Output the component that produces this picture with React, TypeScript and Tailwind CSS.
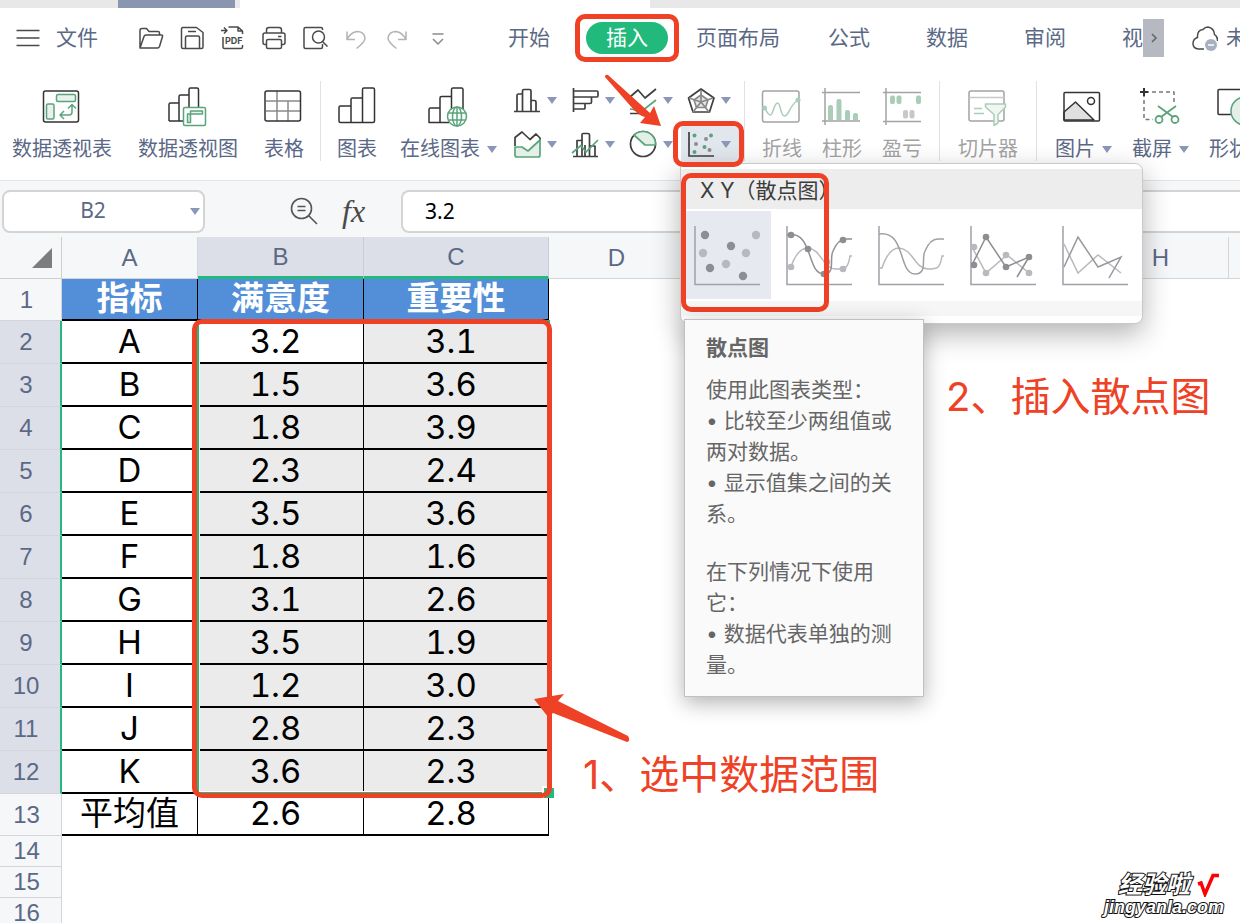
import React from "react";

const RED = "#ee4125";

const Caret = () => (
  <svg className="w-[10px] h-[7px] shrink-0" viewBox="0 0 10 7">
    <path d="M0 0H10L5 7Z" className="fill-[#8a97b8]" />
  </svg>
);

const quickActions = [
  {
    name: "打开",
    icon: (
      <path d="M2 23V5.500Q2 3.500 4 3.500H8.500L11 6.500H20Q21.500 6.500 21.500 8V9.500M2 23L6 11.500Q6.500 10 8 10H23.500Q25 10 24.500 11.500L21.500 21.500Q21 23 19.500 23Z" />
    ),
  },
  {
    name: "保存",
    icon: (
      <>
        <path d="M3.500 2.500H17.500L24 7.500V22Q24 23.500 22.500 23.500H4Q2.500 23.500 2.500 22V4Q2.500 2.500 4 2.500Z" />
        <path d="M6.500 23V12.500Q6.500 11 8 11H19Q20.500 11 20.500 12.500V23M9 6.500H17" />
      </>
    ),
  },
  {
    name: "输出为PDF",
    icon: (
      <>
        <path d="M8.500 2H18L22.500 6V9M18 2V6H22.500M3 12V22Q3 23.500 4.500 23.500H21Q22.500 23.500 22.500 22V20M1 5.500H6.500M4 2.500L7 5.500L4 8.500" />
        <text x="5" y="18.500" stroke="none" className="fill-[#4a4a4a] text-[9px] font-bold">PDF</text>
      </>
    ),
  },
  {
    name: "打印",
    icon: (
      <>
        <path d="M5.500 8V5Q5.500 2.500 8 2.500H18Q20.500 2.500 20.500 5V8M5 19.500H4Q2 19.500 2 17.500V10Q2 8 4 8H22Q24 8 24 10V17.500Q24 19.500 22 19.500H21M17 11.500H20.500" />
        <path d="M7 14.500H19Q20.500 14.500 20.500 16V22Q20.500 23.500 19 23.500H7Q5.500 23.500 5.500 22V16Q5.500 14.500 7 14.500Z" />
      </>
    ),
  },
  {
    name: "打印预览",
    icon: (
      <>
        <path d="M20.500 5V4Q20.500 2.500 19 2.500H3.500Q2 2.500 2 4V22Q2 23.500 3.500 23.500H19Q20.500 23.500 20.500 22V19" />
        <circle cx="16.500" cy="12" r="6" className="fill-white" />
        <path d="M20.500 16.500L25.500 21.500" />
      </>
    ),
  },
  {
    name: "撤销",
    dim: true,
    icon: <path d="M4 6.500V14.500H12M4 14.500Q8 7 14 6.500Q21 6.500 22 13Q22 17 13.500 23.500" />,
  },
  {
    name: "恢复",
    dim: true,
    icon: <path d="M22 6.500V14.500H14M22 14.500Q18 7 12 6.500Q5 6.500 4 13Q4 17 12.500 23.500" />,
  },
  {
    name: "自定义",
    dim: true,
    icon: <path d="M7.500 9H18.500M8 14L13 19L18 14" className="stroke-[#8a8a8a]" />,
  },
];

const smallCharts = [
  {
    name: "柱形图",
    icon: (
      <path d="M0 24.500H26M3 24V8.500Q3 7 4.500 7H8.500M17.500 13.500H20.500Q22 13.500 22 15V24M8.500 24V4Q8.500 2.500 10 2.500H15.500Q17 2.500 17 4V24" />
    ),
  },
  {
    name: "条形图",
    icon: (
      <path d="M1.500 1V25M2 4H25Q26 4 26 5.500V8.500Q26 10 25 10H2M19.500 10V15Q19.500 16.500 18 16.500H2M13 16.500V21Q13 22 12 22H2" />
    ),
  },
  {
    name: "折线图",
    icon: (
      <>
        <path d="M0 10L8 3L15 11L26 2M0 26.500H18" />
        <path d="M0 22L12 24L26 13" className="stroke-[#5aa47c]" />
      </>
    ),
  },
  {
    name: "雷达图",
    icon: (
      <>
        <path d="M13 2L26 11L21.500 25H5L0.500 11Z" />
        <path d="M13 8L20 13L17.500 20.500H8.500L6 13Z" className="stroke-[#888] fill-[#e6e6e6]" />
        <path d="M13 3V15M1 11L13 15L25 11M5 25L13 15L21 25" className="stroke-[#888]" />
      </>
    ),
  },
  {
    name: "面积图",
    icon: (
      <>
        <path d="M1 15V6.500L8 1L16 8.500L22 3L26 7V9" />
        <path d="M1 16H8L14 20L26 9V24Q26 26 24 26H3Q1 26 1 24Z" className="stroke-[#5aa47c] fill-[#e4efe8]" />
      </>
    ),
  },
  {
    name: "组合图",
    icon: (
      <>
        <path d="M1 25.500H26M5 25V9.500H9.500M18 15H23V25M10 25V4Q10 2.500 11 2.500H16Q17.500 2.500 17.500 4V25M13 14V25" />
        <path d="M0 22L9 14.500L14 21L26 9" className="stroke-[#5aa47c]" />
      </>
    ),
  },
  {
    name: "饼图",
    icon: (
      <>
        <circle cx="13" cy="13" r="12.500" />
        <path d="M4 4Q8 0.500 13 0.500A12.500 12.500 0 0 1 25.500 14H15Z" className="stroke-[#5aa47c] fill-[#e4efe8]" />
      </>
    ),
  },
];

const chartTypes = [
  {
    name: "散点图",
    icon: (
      <g stroke="none">
        <g className="fill-[#8e8e92]">
          <circle cx="11" cy="10" r="4.200" />
          <circle cx="37" cy="21" r="4.200" />
          <circle cx="16" cy="43" r="4.200" />
          <circle cx="49" cy="51" r="4.200" />
        </g>
        <g className="fill-[#b8b8bd]">
          <circle cx="62" cy="10" r="4.200" />
          <circle cx="9" cy="28" r="4.200" />
          <circle cx="52" cy="28" r="4.200" />
          <circle cx="32" cy="39" r="4.200" />
        </g>
      </g>
    ),
  },
  {
    name: "带平滑线和数据标记的散点图",
    icon: (
      <>
        <path d="M5 42C9 30 15 23 22 23C35 24 37 44 50 44C59 44 62 44 64 31H66" className="stroke-[#b8b8bd]" />
        <path d="M1 10C28 5 20 49 38 49C50 49 43 33 47 26Q52 14 60 14H66" className="stroke-[#909094]" />
        <g stroke="none" className="fill-[#8e8e92]">
          <circle cx="5" cy="10" r="3.300" />
          <circle cx="22" cy="24" r="3.300" />
          <circle cx="38" cy="49" r="3.300" />
          <circle cx="57" cy="15" r="3.300" />
        </g>
        <g stroke="none" className="fill-[#b8b8bd]">
          <circle cx="5" cy="42" r="3.300" />
          <circle cx="41" cy="37" r="3.300" />
          <circle cx="57" cy="44" r="3.300" />
        </g>
      </>
    ),
  },
  {
    name: "带平滑线的散点图",
    icon: (
      <>
        <path d="M2 43H4C8 31 14 23 21 23C35 24 37 44 50 44C59 44 62 44 64 31H66" className="stroke-[#b8b8bd]" />
        <path d="M1 9C28 5 20 49 37 49C50 49 43 33 47 26Q52 14 60 14H66" className="stroke-[#a0a0a4]" />
      </>
    ),
  },
  {
    name: "带直线和数据标记的散点图",
    icon: (
      <>
        <path d="M2 22L16 48L37 30L59 48" className="stroke-[#b8b8bd]" />
        <path d="M2 40L16 12L36 42L59 32L47 52" className="stroke-[#8e8e92]" />
        <g stroke="none" className="fill-[#b8b8bd]">
          <circle cx="4" cy="22" r="3.300" />
          <circle cx="16" cy="48" r="3.300" />
          <circle cx="36" cy="30" r="3.300" />
          <circle cx="59" cy="48" r="3.300" />
        </g>
        <g stroke="none" className="fill-[#8e8e92]">
          <circle cx="4" cy="40" r="3.300" />
          <circle cx="16" cy="12" r="3.300" />
          <circle cx="36" cy="42" r="3.300" />
          <circle cx="59" cy="32" r="3.300" />
        </g>
      </>
    ),
  },
  {
    name: "带直线的散点图",
    icon: (
      <>
        <path d="M2 19L16 48L36 30L59 48" className="stroke-[#b8b8bd]" />
        <path d="M2 42L16 12L36 42L59 32L47 53" className="stroke-[#98989c]" />
      </>
    ),
  },
];

const rows = [
  ["A", "3.2", "3.1"],
  ["B", "1.5", "3.6"],
  ["C", "1.8", "3.9"],
  ["D", "2.3", "2.4"],
  ["E", "3.5", "3.6"],
  ["F", "1.8", "1.6"],
  ["G", "3.1", "2.6"],
  ["H", "3.5", "1.9"],
  ["I", "1.2", "3.0"],
  ["J", "2.8", "2.3"],
  ["K", "3.6", "2.3"],
];

type ToolProps = {
  label: string;
  caret?: boolean;
  disabled?: boolean;
  children: React.ReactNode;
};

const Tool = ({ label, caret, disabled, children }: ToolProps) => (
  <button
    disabled={disabled}
    className={`flex flex-col items-center shrink-0 gap-[10px] ${disabled ? "text-[#a3a3a3]" : "text-[#5b6986]"}`}
  >
    <svg
      className="w-10 h-10 overflow-visible"
      viewBox="1 0 40 40"
      fill="none"
      strokeWidth="1.500"
      stroke={disabled ? "#a3a3a3" : "#333"}
      strokeLinejoin="round"
    >
      {children}
    </svg>
    <span className="flex items-center gap-[7px] text-xl leading-6">
      {label}
      {caret && <Caret />}
    </span>
  </button>
);

const Divider = () => <div className="w-px h-20 mt-[13px] shrink-0 bg-[#e2e2e2]" />;

const TabStrip = () => (
  <div className="flex h-2 shrink-0 bg-white">
    <div className="w-[118px] bg-[#e8e8e8]" />
    <div className="w-[117px] bg-[#8a96b0]" />
    <div className="w-[5px] bg-[#e8eaef]" />
    <div className="w-[410px]" />
    <div className="flex-1 bg-[#e8e8e8]" />
  </div>
);

const MenuBar = () => (
  <header className="flex items-center h-[60px] shrink-0 pl-4 text-[21px] text-[#5b6986] whitespace-nowrap">
    <button aria-label="菜单" className="shrink-0">
      <svg className="w-6 h-6" viewBox="0 0 24 24" stroke="#4a4a4a" strokeWidth="1.500">
        <path d="M0.500 4.500H23.500M0.500 12H23.500M0.500 19.500H23.500" />
      </svg>
    </button>
    <button className="ml-4 shrink-0">文件</button>
    <div className="flex gap-[15px] ml-10 shrink-0">
      {quickActions.map((a) => (
        <button key={a.name} aria-label={a.name}>
          <svg
            className="w-[26px] h-[26px]"
            viewBox="0 0 26 26"
            fill="none"
            stroke={a.dim ? "#b3b3b3" : "#4a4a4a"}
            strokeWidth="1.500"
            strokeLinejoin="round"
          >
            {a.icon}
          </svg>
        </button>
      ))}
    </div>
    <nav className="flex items-center flex-1 h-full min-w-0 ml-[29px] overflow-hidden">
      <button className="px-7 shrink-0">开始</button>
      <button className="relative h-8 px-5 mx-2 rounded-full bg-[#22b97c] text-white shrink-0">
        插入
        <span className="absolute -inset-x-[11px] -inset-y-2 rounded-[10px] border-5 border-[#ee4125]" />
      </button>
      <button className="px-5 shrink-0">页面布局</button>
      <button className="px-7 shrink-0">公式</button>
      <button className="px-7 shrink-0">数据</button>
      <button className="px-7 shrink-0">审阅</button>
      <button className="pl-7 shrink-0">视</button>
    </nav>
    <button aria-label="更多" className="flex items-center justify-center w-[21px] h-[38px] bg-[#b6b9c2] shrink-0">
      <svg className="w-2 h-3" viewBox="0 0 8 12" fill="none" stroke="#666" strokeWidth="1.600">
        <path d="M2 2L6 6L2 10" />
      </svg>
    </button>
    <button className="flex items-center gap-2 w-12 ml-7 overflow-hidden shrink-0 text-xl">
      <svg className="w-[26px] h-[26px] shrink-0" viewBox="0 0 26 26" fill="none" stroke="#4a4a4a" strokeWidth="1.500">
        <path d="M12 24H6.500Q1 23.500 1 18.500Q1 14 5.500 12.500Q5 5 11 4.500Q13 2 16 2Q22 3 22.500 9.500Q26 12 25.500 16" />
        <circle cx="19" cy="20" r="6" stroke="none" className="fill-[#a6b0c0]" />
        <path d="M16 20H22" stroke="white" />
      </svg>
      未
    </button>
  </header>
);

const ScatterMenu = () => (
  <div className="absolute top-[37px] -left-px z-10 w-[463px] pt-[5px] pb-[7px] text-left bg-white border border-[#c9c9c9] rounded-lg rounded-tl-none shadow-[0_10px_28px_rgba(0,0,0,0.3)]">
    <h3 className="h-10 pt-1 pl-[19px] leading-9 text-[21px] text-[#3c3c3c] bg-[#ededed]">X Y（散点图）</h3>
    <div className="flex gap-1 pt-0.5 pl-0.5">
      {chartTypes.map((c, idx) => (
        <button
          key={c.name}
          aria-label={c.name}
          className={`flex items-center justify-center w-[88px] h-[88px] ${idx === 0 ? "bg-[#e6eaf0]" : ""}`}
        >
          <svg className="w-[66px] h-[60px] overflow-visible" viewBox="0 0 66 60" fill="none" strokeWidth="1.500">
            <path d="M1 1V59.500H66" stroke="#a0a0a8" />
            {c.icon}
          </svg>
        </button>
      ))}
    </div>
    <div className="h-[15px] mt-0.5 bg-[#f6f6f6]" />

    <div className="absolute top-[9px] left-0 w-[148px] h-[139px] rounded-[10px] border-5 border-[#ee4125]" />

    <div
      role="tooltip"
      className="absolute top-[155px] left-[3px] w-[240px] px-[21px] pt-3 pb-4 text-[21px] leading-[31px] text-[#666] whitespace-normal bg-[#fafafa] border border-[#c0c0c0] shadow-[0_6px_20px_rgba(0,0,0,0.3)]"
    >
      <h4 className="mb-[11px] font-bold">散点图</h4>
      <p>使用此图表类型：</p>
      <p>• 比较至少两组值或两对数据。</p>
      <p>• 显示值集之间的关系。</p>
      <p className="mt-[27px]">在下列情况下使用它：</p>
      <p>• 数据代表单独的测量。</p>
    </div>
  </div>
);

const Toolbar = () => (
  <div className="relative z-10 flex h-[112px] shrink-0 whitespace-nowrap">
    <div className="flex gap-[26px] pl-3 pr-4 pt-[19px]">
      <Tool label="数据透视表">
        <rect x="2.500" y="4" width="35" height="31" rx="2" />
        <g className="stroke-[#5aa47c] fill-[#e9f1ec]">
          <rect x="15.500" y="7.500" width="19" height="7" rx="1.500" />
          <rect x="5.500" y="17" width="7.500" height="15" rx="1.500" />
        </g>
        <path d="M31 18V25Q31 28 28 28H20M27 21.500L31 17.500L35 21.500M23 24L19 28L23 32" className="stroke-[#5aa47c]" />
      </Tool>
      <Tool label="数据透视图">
        <path d="M2 34V17.500Q2 16 3.500 16H12M12 34V9.500Q12 8 13.500 8H22M22 20V2.500Q22 1 23.500 1H30Q31.500 1 31.500 2.500V20M2 34H17" />
        <rect x="16.500" y="20.500" width="22" height="18" rx="1.500" className="stroke-[#5aa47c] fill-white" />
        <path d="M23.500 24H35.500V27H23.500ZM20.500 27H23.500V35.500H20.500Z" className="stroke-[#5aa47c] fill-[#e9f1ec]" />
      </Tool>
      <Tool label="表格">
        <path d="M14 4V34M3 14H37M25 14V34M3 24H37" stroke="#8a8a8a" />
        <rect x="2" y="4" width="35.500" height="30" rx="2" />
      </Tool>
    </div>
    <Divider />
    <div className="flex gap-[23px] pl-4 pr-[10px] pt-[19px]">
      <Tool label="图表">
        <path d="M3 20.500Q3 19 4.500 19H15V35.500H4.500Q3 35.500 3 34ZM15 35.500V12.500Q15 11 16.500 11H26.500V35.500ZM26.500 35.500V2.500Q26.500 1 28 1H37Q38.500 1 38.500 2.500V34Q38.500 35.500 37 35.500Z" />
      </Tool>
      <Tool label="在线图表" caret>
        <path d="M1 22.500Q1 21 2.500 21H12V35.500H1ZM12 35.500V11Q12 9.500 13.500 9.500H23.500M12 35.500H21M23.500 23V2.500Q23.500 1 25 1H33.500Q35 1 35 2.500V22" />
        <g className="stroke-[#5aa47c]">
          <circle cx="29" cy="29.500" r="9.500" className="fill-white" />
          <ellipse cx="29" cy="29.500" rx="4.500" ry="9.500" />
          <path d="M29 20V39M20.500 26H37.500M20.500 33H37.500" />
        </g>
      </Tool>
    </div>
    <div className="grid grid-cols-[repeat(4,58px)] auto-rows-[36px] gap-y-2 pt-[14px] pr-[5px]">
      {smallCharts.map((c) => (
        <button key={c.name} aria-label={c.name} className="flex items-center gap-[7px] pl-[7px]">
          <svg
            className="w-[26px] h-[26px] overflow-visible"
            viewBox="0 0 26 26"
            fill="none"
            stroke="#3f3f3f"
            strokeWidth="1.700"
            strokeLinejoin="round"
          >
            {c.icon}
          </svg>
          <Caret />
        </button>
      ))}
      <div className="relative">
        <button aria-label="散点图" className="flex items-center w-full h-full gap-[7px] pl-[7px] bg-[#e2e6ed]">
          <svg className="w-[26px] h-[26px] overflow-visible" viewBox="0 0 26 26" fill="none">
            <path d="M1 1V25H26" stroke="#3f3f3f" strokeWidth="1.700" />
            <g className="fill-[#5aa47c]">
              <circle cx="6.500" cy="4.500" r="2" />
              <circle cx="23" cy="4.500" r="2" />
              <circle cx="16.500" cy="16" r="2" />
              <circle cx="6.500" cy="21" r="2" />
            </g>
            <g className="fill-[#8e8e8e]">
              <circle cx="18" cy="8" r="2" />
              <circle cx="8" cy="13" r="2" />
              <circle cx="21.500" cy="19" r="2" />
            </g>
          </svg>
          <Caret />
        </button>
        <ScatterMenu />
        <span className="absolute -left-2 -right-[5px] -top-[5px] -bottom-[5px] z-20 rounded-[10px] border-5 border-[#ee4125]" />
        <svg className="absolute -top-[52px] -left-[77px] z-20 w-[60px] h-[54px] pointer-events-none" viewBox="0 0 60 54">
          <path d="M1 3Q1 0 4 1L46 39L50 32L57 52L36 49L41 43Q36 42 30 36Z" fill={RED} />
        </svg>
      </div>
    </div>
    <Divider />
    <div className="flex gap-5 px-[17px] pt-[19px]">
      <Tool label="折线" disabled>
        <rect x="1.500" y="4" width="36.500" height="31" rx="2" />
        <path d="M4 21Q7 28 9.500 28C12 28 13 16 16.500 16C20 16 19 29 23.500 29C28 29 28 19 37 13" className="stroke-[#a9cdb8]" />
        <circle cx="3.500" cy="21" r="2.500" stroke="none" className="fill-[#a9cdb8]" />
        <circle cx="37" cy="13" r="2.500" stroke="none" className="fill-[#a9cdb8]" />
      </Tool>
      <Tool label="柱形" disabled>
        <path d="M4 1V38M1 5.500H39M1 34H39" />
        <path d="M7 33V20Q7 18 9 18H10Q12 18 12 20V33ZM15.500 33V14Q15.500 12 17.500 12H18.500Q20.500 12 20.500 14V33ZM24 33V25Q24 23 26 23H27Q29 23 29 25V33ZM32 33V28Q32 26 34 26H35Q37 26 37 28V33Z" stroke="none" className="fill-[#a9cdb8]" />
      </Tool>
      <Tool label="盈亏" disabled>
        <path d="M5 1V38M2 5.500H40M2 34.500H40" />
        <g stroke="none" className="fill-[#a9cdb8]">
          <rect x="9" y="8.500" width="5" height="8.500" rx="2" />
          <rect x="15.500" y="8.500" width="5" height="8.500" rx="2" />
          <rect x="35" y="8.500" width="5" height="8.500" rx="2" />
        </g>
        <g stroke="none" className="fill-[#c8c8c8]">
          <rect x="22" y="23" width="5" height="8.500" rx="2" />
          <rect x="28.500" y="23" width="5" height="8.500" rx="2" />
        </g>
      </Tool>
    </div>
    <Divider />
    <div className="flex px-[18px] pt-[19px]">
      <Tool label="切片器" disabled>
        <rect x="2" y="4" width="35" height="30" rx="2" />
        <path d="M2 10.500H37" stroke="#c8c8c8" />
        <path d="M7 21.500H15M7 26.500H17" className="stroke-[#a9cdb8]" />
        <path d="M18.500 17H38.500V20L31 27.500V36L27 38.500V27.500L18.500 20Z" className="stroke-[#a9cdb8] fill-[#f1f6f3]" />
      </Tool>
    </div>
    <Divider />
    <div className="flex gap-5 px-[18px] pt-[19px]">
      <Tool label="图片" caret>
        <path d="M1 25L12.500 15L31 33H1Z" className="fill-[#e0e0e0]" />
        <rect x="1" y="5.500" width="35.500" height="28.500" rx="1" />
        <circle cx="28" cy="14" r="3.500" />
      </Tool>
      <Tool label="截屏" caret>
        <path d="M4 1V9.500M0 5H8.500" strokeWidth="2" />
        <path d="M12 5H34V15M4 13V32.500H13" stroke="#777" strokeDasharray="4 3" />
        <g className="stroke-[#5aa47c]" strokeWidth="1.800">
          <circle cx="19" cy="32.500" r="3.500" />
          <circle cx="35" cy="32.500" r="3.500" />
          <path d="M18 19L33 30M36 19L21 30" />
        </g>
      </Tool>
      <Tool label="形状">
        <rect x="10" y="2.500" width="30" height="25" rx="1" />
        <circle cx="37" cy="24" r="14" className="stroke-[#5aa47c] fill-[#e4efe8]" />
      </Tool>
    </div>
  </div>
);

const FormulaBar = () => (
  <div className="flex items-center h-[57px] shrink-0 pt-1 pl-0.5 bg-[#f6f7f9] border-t border-[#e2e3e6]">
    <div className="flex items-center w-[203px] h-[43px] pr-[3px] bg-white border-2 border-[#d4d4d4] rounded-lg shrink-0">
      <input
        aria-label="名称框"
        readOnly
        value="B2"
        className="flex-1 min-w-0 pr-2 text-center text-[21px] text-[#5b6986] outline-none font-['Noto_Sans',sans-serif]"
      />
      <Caret />
    </div>
    <svg className="w-7 h-7 ml-[85px] shrink-0" viewBox="0 0 28 28" fill="none" stroke="#555" strokeWidth="1.600">
      <circle cx="11.500" cy="11.500" r="10" />
      <path d="M7.500 9.500H15.500M7.500 13.500H15.500M18.500 18.500L27 27" />
    </svg>
    <span className="w-8 ml-6 text-[32px] leading-8 italic text-[#4a4a4a] shrink-0 font-['Liberation_Serif',serif]">fx</span>
    <input
      aria-label="编辑栏"
      readOnly
      value="3.2"
      className="flex-1 min-w-0 h-[43px] ml-[27px] pl-[22px] text-[21px] text-black bg-white border-2 border-r-0 border-[#d4d4d4] rounded-l-lg outline-none font-['Noto_Sans',sans-serif]"
    />
  </div>
);

const columns = ["A", "B", "C", "D", "E", "F", "G", "H"];

const rowHead = "font-normal text-2xl text-[#5b6986] border-b border-[#d3d5da] font-['Liberation_Sans',sans-serif] pr-2";
const cell = "pb-0.5 text-center border-b-2 border-r border-black";

const Sheet = () => (
  <main className="relative flex-1 min-h-0 overflow-hidden bg-white">
    <table className="w-full table-fixed border-separate border-spacing-0 text-[33px] leading-9 text-black tabular-nums">
      <colgroup>
        <col className="w-[62px]" />
        <col className="w-[136px]" />
        <col className="w-[166px]" />
        <col className="w-[185px]" />
        <col className="w-[136px]" span={5} />
        <col />
      </colgroup>
      <thead>
        <tr className="h-[42px] bg-[#f6f7f9] text-2xl text-[#5b6986] font-['Liberation_Sans',sans-serif]">
          <th className="border-b border-r border-[#cfcfcf]">
            <svg className="w-5 h-5 ml-8" viewBox="0 0 20 20">
              <path d="M20 0V20H0Z" className="fill-[#7d7d7d]" />
            </svg>
          </th>
          {columns.map((c) => (
            <th
              key={c}
              className={
                c === "B" || c === "C"
                  ? "font-normal bg-[#dcdfe8] border-b-3 border-r border-b-[#22b97c] border-r-[#c9ccd5]"
                  : "font-normal border-b border-r border-[#d3d5da]"
              }
            >
              {c}
            </th>
          ))}
          <th className="border-b border-[#d3d5da]" />
        </tr>
      </thead>
      <tbody>
        <tr className="h-[42px]">
          <th className={`${rowHead} bg-[#f6f7f9] border-r`}>1</th>
          {["指标", "满意度", "重要性"].map((t) => (
            <td key={t} className={`${cell} bg-[#528fd8] text-white font-bold`}>
              {t}
            </td>
          ))}
        </tr>
        {rows.map(([name, b, c], idx) => (
          <tr key={name} className="h-[43px]">
            <th className={`${rowHead} bg-[#dcdfe8] border-r-2 border-r-[#22b97c]`}>{idx + 2}</th>
            <td className={cell}>{name}</td>
            <td className={`${cell} pr-[10px] ${idx === 0 ? "bg-white" : "bg-[#ebebeb]"}`}>{b}</td>
            <td className={`${cell} pr-[10px] bg-[#ebebeb]`}>{c}</td>
          </tr>
        ))}
        <tr className="h-[42px]">
          <th className={`${rowHead} bg-[#f6f7f9] border-r`}>13</th>
          <td className={cell}>平均值</td>
          <td className={`${cell} pr-[10px]`}>2.6</td>
          <td className={`${cell} pr-[10px]`}>2.8</td>
        </tr>
        {[14, 15, 16].map((n) => (
          <tr key={n} className="h-[31px]">
            <th className={`${rowHead} leading-[30px] bg-[#f6f7f9] border-r`}>{n}</th>
          </tr>
        ))}
      </tbody>
    </table>

    {/* selected range with its fill handle */}
    <div className="absolute top-[83px] left-[197px] w-[353px] h-[474px] border-2 border-[#22b97c] shadow-[inset_0_0_0_1px_white]">
      <span className="absolute -right-1.5 -bottom-1.5 w-3 h-3 bg-[#22b97c] border-t-2 border-l-2 border-white" />
    </div>

    {/* step notes */}
    <div className="absolute top-[82px] left-[192px] w-[360px] h-[479px] rounded-[10px] border-5 border-[#ee4125]" />
    <svg className="absolute top-[454px] left-[533px] w-[100px] h-[54px]" viewBox="0 0 100 54">
      <path d="M1 8L31 3L25 10L95 45Q98 50 94 51L20 22L15 26Z" fill={RED} />
    </svg>
    <p className="absolute top-[518px] left-[583px] text-[40px] leading-10 text-[#ee4125]">1、选中数据范围</p>
    <p className="absolute top-[140px] left-[946px] text-[40px] leading-10 text-[#ee4125]">2、插入散点图</p>
  </main>
);

const App: React.FC = () => {
  return (
    <div className="relative flex flex-col h-screen overflow-hidden bg-white font-['Inter','Noto_Sans_CJK_SC',sans-serif]">
      <TabStrip />
      <MenuBar />
      <Toolbar />
      <FormulaBar />
      <Sheet />

      {/* site mark */}
      <div className="absolute right-4 bottom-1.5 font-bold italic text-white text-right [-webkit-text-stroke:2px_#111] [paint-order:stroke_fill]">
        <div className="flex items-center justify-end gap-1.5 pr-1 text-2xl leading-6">
          经验啦
          <svg className="w-6 h-6" viewBox="0 0 24 24" fill="none" stroke="#f00" strokeWidth="3.500">
            <path d="M2 11L5 10L9 21L17 2.500H23" />
          </svg>
        </div>
        <div className="text-lg leading-5 font-['Liberation_Sans',sans-serif]">jingyanla.com</div>
      </div>
    </div>
  );
};

export default App;
